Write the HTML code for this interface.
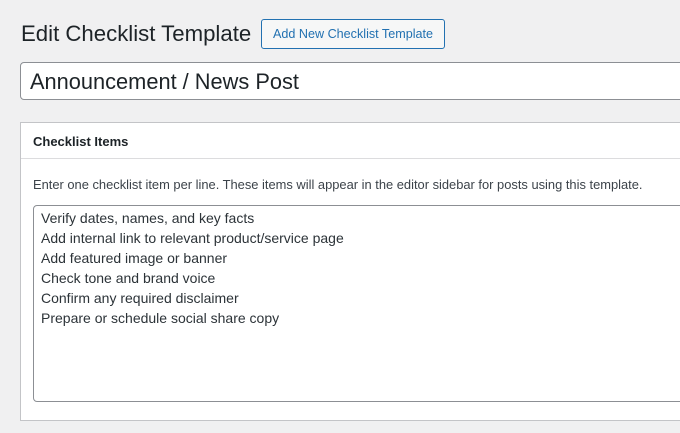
<!DOCTYPE html>
<html><head><style>
body{margin:0;background:#f0f0f1;font-family:"Liberation Sans",sans-serif;color:#1d2327;width:680px;height:433px;overflow:hidden;position:relative}
h1{position:absolute;left:21px;top:19px;margin:0;font-weight:400;font-size:22.2px;line-height:30px}
.btn{position:absolute;left:261px;top:19px;width:182px;height:28px;border:1px solid #2271b1;border-radius:3px;background:#f6f7f7;color:#2271b1;font-size:12.6px;line-height:29px;text-align:center}
.title{position:absolute;left:20px;top:62px;width:680px;height:36px;border:1px solid #8c8f94;border-radius:4px;background:#fff;font-size:21.8px;line-height:37px;padding-left:9px}
.box{position:absolute;left:20px;top:122px;width:680px;height:297px;border:1px solid #c3c4c7;background:#fff}
.hd{height:35px;border-bottom:1px solid #dcdcde;font-weight:bold;font-size:13px;line-height:37px;padding-left:12px}
.desc{position:absolute;left:12px;top:54px;font-size:12.9px;color:#3c434a;white-space:nowrap}
.ta{position:absolute;left:12px;top:82px;width:680px;height:197px;border:1px solid #8c8f94;border-radius:4px;padding:2px 0 0 7px;font-size:14px;line-height:20px;color:#2c3338;box-sizing:border-box}
</style></head><body>
<h1>Edit Checklist Template</h1>
<div class="btn">Add New Checklist Template</div>
<div class="title">Announcement / News Post</div>
<div class="box">
<div class="hd">Checklist Items</div>
<div class="desc">Enter one checklist item per line. These items will appear in the editor sidebar for posts using this template.</div>
<div class="ta">Verify dates, names, and key facts<br>Add internal link to relevant product/service page<br>Add featured image or banner<br>Check tone and brand voice<br>Confirm any required disclaimer<br>Prepare or schedule social share copy</div>
</div>
</body></html>
